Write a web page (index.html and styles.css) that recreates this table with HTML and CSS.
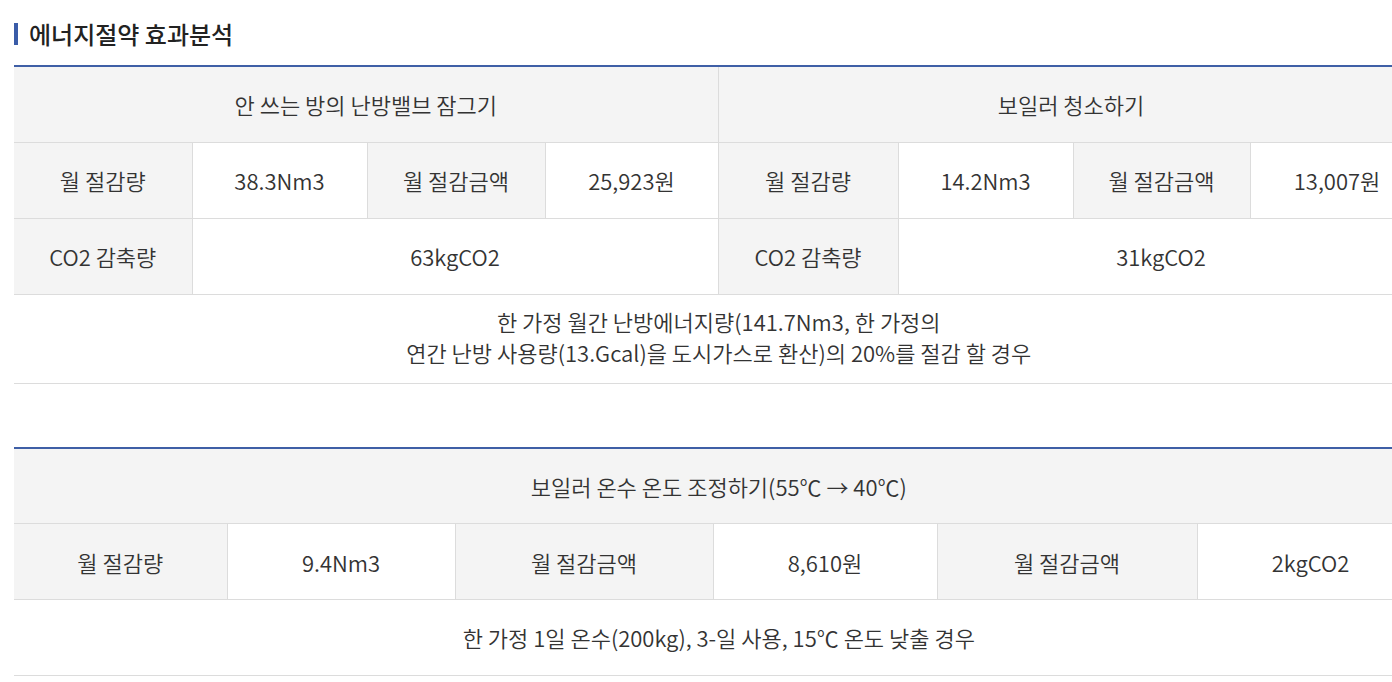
FILE: index.html
```html
<html>
<head>
    <meta charset="utf-8">
    <title>에너지절약 효과분석</title>
    <link rel="stylesheet" href="styles.css">
</head>
<body>
    <div class="content">
        <h2 class="sub-title">에너지절약 효과분석</h2>

        <table class="effect-table">
            <colgroup>
                <col style="width:178px"><col style="width:175px"><col style="width:178px"><col style="width:173px">
                <col style="width:180px"><col style="width:175px"><col style="width:177px"><col style="width:174px">
            </colgroup>
            <tr>
                <th colspan="4">안 쓰는 방의 난방밸브 잠그기</th>
                <th colspan="4">보일러 청소하기</th>
            </tr>
            <tr>
                <th>월 절감량</th>
                <td>38.3Nm3</td>
                <th>월 절감금액</th>
                <td>25,923원</td>
                <th>월 절감량</th>
                <td>14.2Nm3</td>
                <th>월 절감금액</th>
                <td>13,007원</td>
            </tr>
            <tr>
                <th>CO2 감축량</th>
                <td colspan="3">63kgCO2</td>
                <th>CO2 감축량</th>
                <td colspan="3">31kgCO2</td>
            </tr>
            <tr>
                <td colspan="8" class="note">한 가정 월간 난방에너지량(141.7Nm3, 한 가정의<br>연간 난방 사용량(13.Gcal)을 도시가스로 환산)의 20%를 절감 할 경우</td>
            </tr>
        </table>

        <table class="effect-table second">
            <colgroup>
                <col style="width:213px"><col style="width:228px"><col style="width:258px">
                <col style="width:224px"><col style="width:260px"><col style="width:227px">
            </colgroup>
            <tr>
                <th colspan="6">보일러 온수 온도 조정하기(55℃ → 40℃)</th>
            </tr>
            <tr>
                <th>월 절감량</th>
                <td>9.4Nm3</td>
                <th>월 절감금액</th>
                <td>8,610원</td>
                <th>월 절감금액</th>
                <td>2kgCO2</td>
            </tr>
            <tr>
                <td colspan="6" class="note">한 가정 1일 온수(200kg), 3-일 사용, 15℃ 온도 낮출 경우</td>
            </tr>
        </table>
    </div>
</body>
</html>
```

FILE: styles.css
```css
html, body {
    overflow-x: hidden;
}
body {
    margin: 0;
    padding: 0;
    background: #fff;
    color: #333;
    font-family: "Noto Sans CJK KR", "Noto Sans", sans-serif;
}
.content {
    padding: 23px 0 0 14px;
    width: 1410px;
}
.sub-title {
    margin: 0;
    padding-left: 11px;
    border-left: 4px solid #3a5ca8;
    font-size: 24px;
    line-height: 22px;
    font-weight: 500;
    color: #222;
}
.effect-table {
    width: 1410px;
    table-layout: fixed;
    border-collapse: collapse;
    border-top: 2px solid #3f5fa6;
    margin-top: 20px;
}
.effect-table.second {
    margin-top: 63px;
}
.effect-table th,
.effect-table td {
    height: 76px;
    padding: 0;
    text-align: center;
    font-size: 22px;
    font-weight: 350;
    color: #333;
    border: 1px solid #dcdcdc;
    border-top: none;
}
.effect-table th {
    background: #f4f4f4;
}
.effect-table td {
    background: #fff;
}
.effect-table tr > :first-child {
    border-left: none;
}
.effect-table td.note {
    height: 89px;
    line-height: 31px;
    padding-bottom: 3px;
}
.effect-table.second td.note {
    height: 76px;
    padding-bottom: 0;
}
```
